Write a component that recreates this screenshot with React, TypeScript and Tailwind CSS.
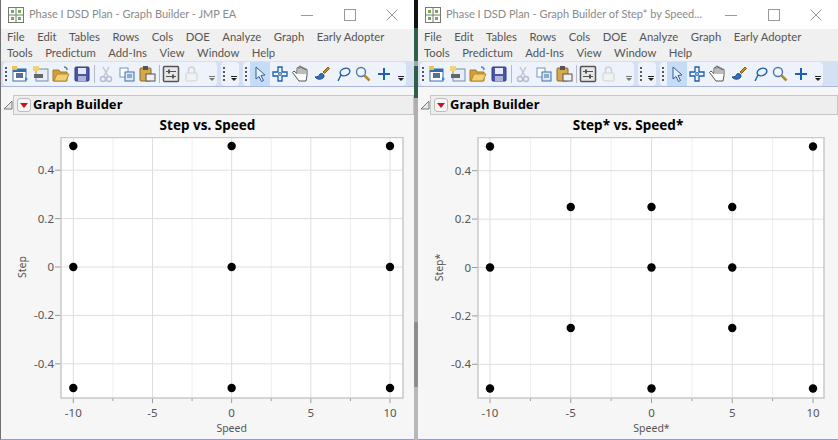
import React from "react";

const font = "font-['Noto_Sans','Liberation_Sans',sans-serif]";

function Grip() {
  return (
    <svg width="4" height="18" className="shrink-0">
      {[2, 6, 10, 14].map((y) => (
        <rect key={y} x="1" y={y} width="2" height="2" fill="#55585f" />
      ))}
    </svg>
  );
}

function Overflow({ dark }: { dark?: boolean }) {
  const c = dark ? "#222" : "#777";
  return (
    <svg width="8" height="20" className="shrink-0">
      <rect x="1" y="12" width="6" height="1" fill={c} />
      <path d="M1 14h6l-3 3z" fill={c} />
    </svg>
  );
}

function Sep() {
  return <div className="w-px h-[18px] bg-[#b4bac6] shrink-0" />;
}

function Icon({ children }: { children: React.ReactNode }) {
  return (
    <svg width="20" height="20" viewBox="0 0 20 20" className="shrink-0">
      {children}
    </svg>
  );
}

const NewTable = () => (
  <Icon>
    <rect x="3" y="5" width="13" height="12" fill="#fff" stroke="#3a6ea8" />
    <rect x="3" y="5" width="13" height="3" fill="#2f6fb0" />
    <rect x="6" y="9" width="7" height="5" fill="#5b6f88" />
    <path d="M15 13l3 2-3 2z" fill="#2b8ad0" />
    <rect x="2" y="2" width="5" height="4" fill="#f0c44c" />
  </Icon>
);
const NewDoc = () => (
  <Icon>
    <rect x="5" y="5" width="12" height="12" fill="#e6eef7" stroke="#6d8fb3" />
    <rect x="3" y="10" width="9" height="4" fill="#666" />
    <rect x="2" y="2" width="6" height="5" fill="#f3d271" />
  </Icon>
);
const Folder = () => (
  <Icon>
    <path d="M2 6h6l1 2h7v9H2z" fill="#d2a13c" stroke="#a67c24" />
    <path d="M3 17l3-7h12l-3 7z" fill="#f2cf73" stroke="#b48a30" />
    <path d="M13 3c2 0 3 1 3 3" stroke="#5a83b8" fill="none" strokeWidth="1.5" />
  </Icon>
);
const Save = () => (
  <Icon>
    <rect x="3" y="3" width="14" height="14" rx="1" fill="#4a55a8" stroke="#333b80" />
    <rect x="6" y="4" width="8" height="6" fill="#e8ebf5" />
    <rect x="6" y="12" width="8" height="5" fill="#aeb4d8" />
  </Icon>
);
const Scissors = () => (
  <Icon>
    <path d="M7 3l5 9M13 3l-5 9" stroke="#c4c8d0" strokeWidth="1.5" fill="none" />
    <circle cx="7" cy="15" r="2.5" fill="none" stroke="#b4bdd6" strokeWidth="1.5" />
    <circle cx="13" cy="15" r="2.5" fill="none" stroke="#b4bdd6" strokeWidth="1.5" />
  </Icon>
);
const Copy = () => (
  <Icon>
    <rect x="3" y="4" width="8" height="9" fill="#fff" stroke="#6f97c6" />
    <rect x="8" y="8" width="9" height="9" fill="#dbe8f6" stroke="#3d6ea8" />
    <path d="M10 11h5M10 13h5" stroke="#3d6ea8" />
  </Icon>
);
const Paste = () => (
  <Icon>
    <rect x="3" y="4" width="11" height="13" rx="1" fill="#d6a84a" stroke="#8a6a2a" />
    <rect x="6" y="2" width="5" height="4" fill="#555" />
    <rect x="9" y="10" width="9" height="7" fill="#f0f0f0" stroke="#555" />
  </Icon>
);
const Calc = () => (
  <Icon>
    <rect x="2.500" y="2.500" width="15" height="15" rx="1" fill="#e8e8e8" stroke="#555" strokeWidth="1.5" />
    <path d="M5 7.500h10M5 12.500h10" stroke="#555" />
    <rect x="7" y="5.500" width="2" height="4" fill="#555" />
    <rect x="11" y="10.500" width="2" height="4" fill="#555" />
  </Icon>
);
const Lock = () => (
  <Icon>
    <rect x="4" y="9" width="11" height="8" rx="1" fill="#f1f2f4" stroke="#cfd1d5" />
    <path d="M6.500 9V6a3 3 0 016 0v3" fill="none" stroke="#cfd1d5" strokeWidth="1.5" />
  </Icon>
);
const Arrow = () => (
  <Icon>
    <path d="M6 3l9 8-4 .5 2.500 5-2 1-2.500-5L6 15z" fill="#e8f0fb" stroke="#2f5f96" />
  </Icon>
);
const Cross = () => (
  <Icon>
    <path d="M8 3h4v5h5v4h-5v5H8v-5H3V8h5z" fill="#eef5fd" stroke="#1e5ea8" strokeWidth="1.3" />
    <circle cx="10" cy="10" r="1.4" fill="none" stroke="#1e5ea8" />
  </Icon>
);
const Hand = () => (
  <Icon>
    <path
      d="M5 13L1.500 8.500 3 7l3 2.500V4.500a1 1 0 012 0V3a1 1 0 012 0v1a1 1 0 012 0v1a1 1 0 012 0v1a1 1 0 012 0v5.500L15 17H8z"
      fill="#fff"
      stroke="#555"
      strokeWidth="1"
    />
    <path d="M8 4.500V10M10 3.500V10M12 4.500V10M14 5.500V10" stroke="#555" strokeWidth="0.8" fill="none" />
  </Icon>
);
const Brush = () => (
  <Icon>
    <path d="M11 8l5-5 1.500 1.500-5 5z" fill="#c68a24" stroke="#8a5d14" />
    <path d="M3 13c3 0 4-1 5-3 2-1 4 0 4 2 0 3-6 5-9 1z" fill="#2f6fc0" stroke="#1d4a8a" />
  </Icon>
);
const Lasso = () => (
  <Icon>
    <ellipse cx="12" cy="8" rx="5" ry="3.500" fill="none" stroke="#1e5ea8" strokeWidth="1.400" transform="rotate(-20 12 8)" />
    <path d="M8 11c-1 2-2 4-3 6" stroke="#1e5ea8" strokeWidth="1.400" fill="none" />
  </Icon>
);
const Mag = () => (
  <Icon>
    <circle cx="8" cy="8" r="4.500" fill="#f2f7fd" stroke="#4b78ad" strokeWidth="1.400" />
    <path d="M11.500 11.500l5 5" stroke="#b28a2c" strokeWidth="2.500" />
  </Icon>
);
const Plus = () => (
  <Icon>
    <path d="M10 4v12M4 10h12" stroke="#1a5fb4" strokeWidth="2" />
  </Icon>
);

function Toolbar() {
  return (
    <div className="h-[26px] bg-[#d6e0f3] border-b border-[#a9b8dc] flex items-center pl-[2px] gap-[4px]">
      <div className="h-[24px] w-[214px] bg-[#eef2fa] rounded-sm flex items-center pl-[1px]">
        <Grip />
        <div className="flex items-center ml-[2px] gap-[0.7px]">
          <NewTable />
          <NewDoc />
          <Folder />
          <Save />
        </div>
        <div className="mx-[1.500px]"><Sep /></div>
        <div className="flex items-center gap-[0.7px]">
          <Scissors />
          <Copy />
          <Paste />
        </div>
        <div className="mx-[1.500px]"><Sep /></div>
        <div className="flex items-center gap-[0.7px]">
          <Calc />
          <Lock />
        </div>
        <div className="ml-[6px]"><Overflow /></div>
      </div>
      <div className="h-[24px] w-[18px] bg-[#eef2fa] rounded-sm flex items-center pl-[1px] gap-[4px]">
        <Grip />
        <Overflow dark />
      </div>
      <div className="h-[24px] w-[163px] bg-[#eef2fa] rounded-sm flex items-center pl-[1px]">
        <Grip />
        <div className="flex items-center ml-[1.500px] gap-[0.8px]">
          <div className="bg-[#c4dcf6] h-[24px] w-[20px] flex items-center"><Arrow /></div>
          <Cross />
          <Hand />
          <Brush />
          <Lasso />
          <Mag />
          <Plus />
        </div>
        <div className="ml-[3px]"><Overflow dark /></div>
      </div>
    </div>
  );
}

function Chart({
  width,
  left,
  right,
  xs,
  y0,
  points,
  xLabel,
  yLabel,
}: {
  width: number;
  left: number;
  right: number;
  xs: [number, number];
  y0: number;
  points: [number, number][];
  xLabel: string;
  yLabel: string;
}) {
  const top = 0.5;
  const bottom = 261;
  const sx = (v: number) => xs[0] + ((v + 10) / 20) * (xs[1] - xs[0]);
  const sy = (v: number) => y0 - v * 242;
  const major = [-10, -5, 0, 5, 10];
  const minor = [-7.5, -2.5, 2.5, 7.5];
  const ys = [0.4, 0.2, 0, -0.2, -0.4];
  const labelCx = (xs[0] + xs[1]) / 2;
  return (
    <svg width={width} height={300} className="block" fontFamily="Noto Sans, Liberation Sans, sans-serif">
      <rect x={left} y={top} width={right - left} height={bottom - top} fill="#fff" />
      {minor.map((v) => (
        <g key={v}>
          <line x1={sx(v)} x2={sx(v)} y1={top} y2={bottom} stroke="#efefef" />
          <line x1={sx(v)} x2={sx(v)} y1={bottom} y2={bottom + 3} stroke="#9a9a9a" />
        </g>
      ))}
      {major.map((v) => (
        <g key={v}>
          <line x1={sx(v)} x2={sx(v)} y1={top} y2={bottom} stroke="#dedede" />
          <line x1={sx(v)} x2={sx(v)} y1={bottom} y2={bottom + 5} stroke="#9a9a9a" />
          <text x={sx(v)} y={280} textAnchor="middle" fontSize="11.500" fill="#555">
            {v}
          </text>
        </g>
      ))}
      {ys.map((v) => (
        <g key={v}>
          <line x1={left} x2={right} y1={sy(v)} y2={sy(v)} stroke="#dedede" />
          <line x1={left - 6} x2={left} y1={sy(v)} y2={sy(v)} stroke="#9a9a9a" />
          <text x={left - 7} y={sy(v) + 4} textAnchor="end" fontSize="11.500" fill="#555">
            {v}
          </text>
        </g>
      ))}
      <path
        d={`M${left} ${top}H${right}V${bottom}H${left}Z`}
        fill="none"
        stroke="#c9c9c9"
        strokeWidth="1.500"
      />
      {points.map(([x, y]) => (
        <circle key={`${x},${y}`} cx={sx(x)} cy={sy(y)} r="4.200" fill="#000" />
      ))}
      <text x={labelCx} y={295} textAnchor="middle" fontSize="10.500" fill="#555">
        {xLabel}
      </text>
      <text
        transform={`translate(${left - 35} ${y0}) rotate(-90)`}
        textAnchor="middle"
        fontSize="10.500"
        fill="#555"
      >
        {yLabel}
      </text>
    </svg>
  );
}

function Window({
  width,
  title,
  chartTitle,
  chart,
  leftEdge,
}: {
  width: number;
  title: string;
  chartTitle: string;
  chart: React.ReactNode;
  leftEdge?: boolean;
}) {
  const row1 = ["File", "Edit", "Tables", "Rows", "Cols", "DOE", "Analyze", "Graph", "Early Adopter"];
  const row2 = ["Tools", "Predictum", "Add-Ins", "View", "Window", "Help"];
  return (
    <div
      className={`h-full flex flex-col shrink-0 bg-[#f6f6f6] border-b border-[#8f9fca] ${
        leftEdge ? "border-l border-l-[#707070]" : ""
      }`}
      style={{ width }}
    >
      <div className="h-[29px] bg-white flex items-center pl-[7px]">
        <svg width="16" height="16" className="shrink-0">
          <rect x="0.500" y="0.500" width="15" height="15" fill="#fff" stroke="#777" />
          <path d="M8 1v14M1 8h14" stroke="#777" />
          <rect x="3" y="3" width="3" height="3" fill="#6fae4a" />
          <rect x="10" y="3" width="3" height="3" fill="#6fae4a" />
          <rect x="3" y="10" width="3" height="3" fill="#6fae4a" />
          <rect x="10" y="10" width="3" height="3" fill="#6fae4a" />
        </svg>
        <span className="ml-[5px] font-['Lato','Noto_Sans',sans-serif] text-[11px] text-[#8a8a8a] whitespace-nowrap">
          {title}
        </span>
        <div className="ml-auto flex items-center pr-[14px] gap-[26.500px]">
          <svg width="16" height="14"><path d="M2 7.500h12" stroke="#999" /></svg>
          <svg width="16" height="14"><rect x="2.500" y="1.500" width="11" height="11" fill="none" stroke="#999" /></svg>
          <svg width="16" height="14"><path d="M2.500 1.500l11 11M13.500 1.500l-11 11" stroke="#999" /></svg>
        </div>
      </div>
      <div className="h-[32px] bg-[#f0f0f0] pl-[6px] font-['Lato','Noto_Sans',sans-serif] text-[11.300px] leading-[16px] text-[#555]">
        <div className="flex gap-[12.500px] whitespace-nowrap">
          {row1.map((m) => (
            <span key={m}>{m}</span>
          ))}
        </div>
        <div className="flex gap-[12.500px] whitespace-nowrap">
          {row2.map((m) => (
            <span key={m}>{m}</span>
          ))}
        </div>
      </div>
      <Toolbar />
      <div className="mt-[8px] flex items-center pl-[2px]">
        <svg width="10" height="10" className="shrink-0">
          <path d="M9 1v8H1z" fill="#e8e8e8" stroke="#777" />
        </svg>
        <div className="h-[20px] flex-1 bg-[#eeeeee] border border-[#c6c6c6] flex items-center pl-[3px]">
          <div className="w-[14px] h-[14px] rounded-[3px] border border-[#bdbdbd] bg-[#f6f6f6] flex items-center justify-center shrink-0">
            <svg width="8" height="5"><path d="M0 0h8L4 5z" fill="#d01020" /></svg>
          </div>
          <span className="ml-[2px] text-[13px] font-bold text-black">Graph Builder</span>
        </div>
      </div>
      <div className="h-[22px] text-center text-[13.500px] leading-[20px] font-bold text-black">
        {chartTitle}
      </div>
      {chart}
    </div>
  );
}

const leftPoints: [number, number][] = [
  [-10, 0.5],
  [0, 0.5],
  [10, 0.5],
  [-10, 0],
  [0, 0],
  [10, 0],
  [-10, -0.5],
  [0, -0.5],
  [10, -0.5],
];

const rightPoints: [number, number][] = [
  [-10, 0.5],
  [10, 0.5],
  [-5, 0.25],
  [0, 0.25],
  [5, 0.25],
  [-10, 0],
  [0, 0],
  [5, 0],
  [-5, -0.25],
  [5, -0.25],
  [-10, -0.5],
  [0, -0.5],
  [10, -0.5],
];

export default function App() {
  return (
    <div className={`w-[838px] h-[440px] overflow-hidden flex ${font}`}>
      <Window
        width={414}
        leftEdge
        title="Phase I DSD Plan - Graph Builder - JMP EA"
        chartTitle="Step vs. Speed"
        chart={
          <Chart
            width={413}
            left={60}
            right={402}
            xs={[72.3, 389]}
            y0={130}
            points={leftPoints}
            xLabel="Speed"
            yLabel="Step"
          />
        }
      />
      <div className="w-[4px] h-full flex flex-col shrink-0">
        <div className="h-[28px] bg-[#111111]" />
        <div className="h-[33px] bg-[#2f5f48]" />
        <div className="h-[5px] bg-[#9aa8a0]" />
        <div className="h-[32px] bg-[#2f5f48]" />
        <div className="h-[224px] bg-[#b0b0b0]" />
        <div className="h-[65px] bg-[#8f8f8f]" />
        <div className="flex-1 bg-[#b8b8b8]" />
      </div>
      <Window
        width={420}
        title="Phase I DSD Plan - Graph Builder of Step* by Speed..."
        chartTitle="Step* vs. Speed*"
        chart={
          <Chart
            width={420}
            left={60}
            right={406}
            xs={[72, 395]}
            y0={130.5}
            points={rightPoints}
            xLabel="Speed*"
            yLabel="Step*"
          />
        }
      />
    </div>
  );
}
